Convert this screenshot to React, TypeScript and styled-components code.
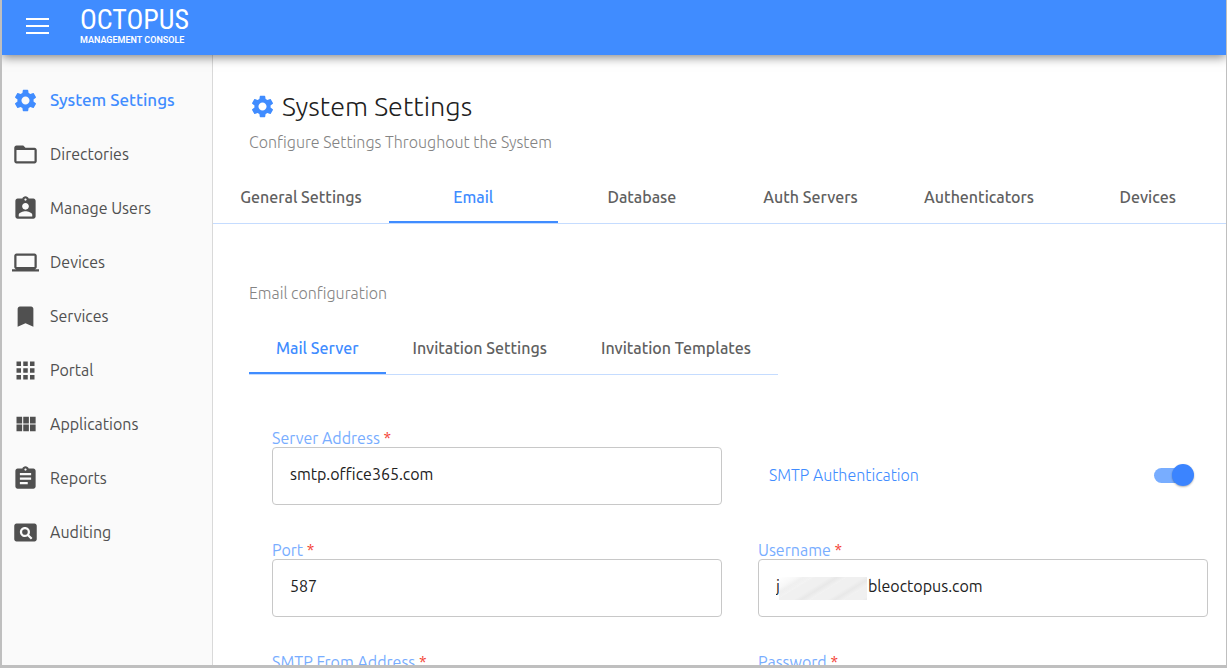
import React, { useState } from 'react';
import styled, { createGlobalStyle, css } from 'styled-components';
import {
  MdSettings,
  MdFolderOpen,
  MdAssignmentInd,
  MdLaptop,
  MdBookmark,
  MdApps,
  MdAssignment,
  MdPageview,
} from 'react-icons/md';

const BLUE = '#408cff';

const GlobalStyle = createGlobalStyle`
  *, *::before, *::after { box-sizing: border-box; }
  body {
    margin: 0;
    background: #fff;
    font-family: Ubuntu, "Noto Sans", "Open Sans", sans-serif;
    font-size: 16px;
    line-height: 20px;
    color: #212121;
  }
  button, input { font: inherit; }
`;

const Frame = styled.div`
  display: flex;
  flex-direction: column;
  height: 100vh;
  overflow: hidden;
  border: solid #bfbfbf;
  border-width: 0 1px 3px 2px;
`;

const Header = styled.header`
  display: flex;
  flex: none;
  align-items: center;
  gap: 29px;
  height: 55px;
  padding: 0 24px 4px;
  background: ${BLUE};
  color: #fff;
  box-shadow: 0 2px 10px rgba(0, 0, 0, 0.5);
  z-index: 1;
`;

const MenuButton = styled.button`
  display: flex;
  padding: 0;
  border: 0;
  background: none;
  color: inherit;
  cursor: pointer;
`;

const Brand = styled.div`
  display: flex;
  flex-direction: column;
  padding-bottom: 2px;
`;

const BrandName = styled.span`
  font-family: "Ubuntu Condensed", "Roboto Condensed", "Liberation Sans Narrow", Roboto, sans-serif;
  font-size: 28px;
  font-weight: 400;
  line-height: 30px;
`;

const BrandTagline = styled.span`
  font-family: Roboto, sans-serif;
  font-size: 9px;
  font-weight: 600;
  line-height: 10px;
  white-space: nowrap;
`;

const Body = styled.div`
  display: flex;
  flex: 1;
  min-height: 0;
`;

const Sidebar = styled.nav`
  flex: none;
  width: 211px;
  padding-top: 18px;
  background: #fafafa;
  border-right: 1px solid #d9d9d9;
`;

const NavLink = styled.a<{ $active?: boolean }>`
  display: flex;
  align-items: center;
  gap: 11px;
  height: 54px;
  padding-left: 10px;
  color: ${(p) => (p.$active ? BLUE : '#505050')};
  font-size: ${(p) => (p.$active ? 17 : 16)}px;
  font-weight: ${(p) => (p.$active ? 500 : 400)};
  text-decoration: none;
  svg { flex: none; }
`;

const Main = styled.main`
  flex: 1;
  min-width: 0;
  overflow: hidden;
`;

const PageHead = styled.div`
  padding: 33px 36px 0;
`;

const Title = styled.h1`
  display: flex;
  align-items: center;
  gap: 6px;
  margin: 0;
  font-size: 27px;
  font-weight: 300;
  line-height: 36px;
  svg { color: ${BLUE}; }
`;

const Muted = styled.p`
  margin: 0;
  font-weight: 300;
  color: #848484;
`;

const Subtitle = styled(Muted)`
  margin-top: 8px;
`;

const tabList = css`
  border-bottom: 1px solid #c5dcff;
`;

const MainTabs = styled.div`
  ${tabList}
  display: grid;
  grid-template-columns: 176px repeat(5, minmax(168px, 1fr));
  margin: 20px -6px 0 0;
`;

const SubTabs = styled.div`
  ${tabList}
  display: flex;
  width: fit-content;
  margin-top: 20px;
`;

const Tab = styled.button<{ $active: boolean }>`
  height: 51px;
  padding: 0 27px;
  border: 0;
  border-bottom: 2px solid ${(p) => (p.$active ? BLUE : 'transparent')};
  background: none;
  color: ${(p) => (p.$active ? BLUE : '#606060')};
  font-weight: 500;
  white-space: nowrap;
  cursor: pointer;
`;

const Section = styled.section`
  padding: 59px 18px 0 36px;
`;

const Form = styled.form`
  display: grid;
  grid-template-columns: 1fr 1fr;
  gap: 36px;
  padding: 54px 0 0 23px;
`;

const Field = styled.div`
  position: relative;
  display: flex;
  flex-direction: column;
`;

const Label = styled.label`
  line-height: 18px;
  color: #78adff;
  span { color: #f44336; }
`;

const TextInput = styled.input`
  width: 100%;
  height: 58px;
  padding: 0 17px 4px;
  border: 1px solid #c8c8c8;
  border-radius: 4px;
  background: #fff;
  color: #212121;
`;

const Redaction = styled.span`
  position: absolute;
  left: 21px;
  bottom: 17px;
  width: 88px;
  height: 23px;
  background:
    linear-gradient(150deg, #fff 0%, rgba(255, 255, 255, 0) 30%),
    repeating-linear-gradient(148deg, #f0f0f0 0 9px, #e8e8e8 13px, #f2f2f2 18px);
`;

const ToggleRow = styled.label`
  display: flex;
  align-items: center;
  justify-content: space-between;
  height: 58px;
  margin-top: 18px;
  padding: 0 14px 2px 11px;
  font-weight: 300;
  color: ${BLUE};
`;

const Switch = styled.input`
  appearance: none;
  position: relative;
  width: 40px;
  height: 22px;
  margin: 0;
  cursor: pointer;
  &::before {
    content: '';
    position: absolute;
    inset: 4px 2px 3px 0;
    border-radius: 8px;
    background: #bdbdbd;
  }
  &::after {
    content: '';
    position: absolute;
    top: 0;
    left: 0;
    width: 22px;
    height: 22px;
    border-radius: 50%;
    background: #fafafa;
    box-shadow: 0 1px 2px rgba(0, 0, 0, 0.3);
  }
  &:checked::before { background: #78adff; }
  &:checked::after { left: 18px; background: #3b84ff; }
`;

function ModulesIcon({ size = 24 }: { size?: number }) {
  return (
    <svg width={size} height={size} viewBox="0 0 24 24" fill="currentColor">
      <path d="M4 11h5V5H4v6zm0 7h5v-6H4v6zm6 0h5v-6h-5v6zm6 0h5v-6h-5v6zm-6-7h5V5h-5v6zm6-6v6h5V5h-5z" />
    </svg>
  );
}

const NAV = [
  { label: 'System Settings', Icon: MdSettings },
  { label: 'Directories', Icon: MdFolderOpen },
  { label: 'Manage Users', Icon: MdAssignmentInd },
  { label: 'Devices', Icon: MdLaptop },
  { label: 'Services', Icon: MdBookmark },
  { label: 'Portal', Icon: MdApps },
  { label: 'Applications', Icon: ModulesIcon },
  { label: 'Reports', Icon: MdAssignment },
  { label: 'Auditing', Icon: MdPageview },
];

const MAIN_TABS = ['General Settings', 'Email', 'Database', 'Auth Servers', 'Authenticators', 'Devices'];
const EMAIL_TABS = ['Mail Server', 'Invitation Settings', 'Invitation Templates'];

type FieldProps = {
  id: string;
  label: string;
  value?: string;
  type?: string;
  redacted?: boolean;
};

function FormField({ id, label, value = '', type = 'text', redacted }: FieldProps) {
  return (
    <Field>
      <Label htmlFor={id}>
        {label} <span>*</span>
      </Label>
      <TextInput id={id} type={type} defaultValue={value} required />
      {redacted && <Redaction />}
    </Field>
  );
}

export default function App() {
  const [mainTab, setMainTab] = useState('Email');
  const [emailTab, setEmailTab] = useState('Mail Server');

  return (
    <>
      <GlobalStyle />
      <Frame>
        <Header>
          <MenuButton aria-label="Menu">
            <svg width="25" height="20" viewBox="0 0 25 20" fill="currentColor">
              <path d="M0 2h23v2H0zM0 9h23v2H0zM0 16h23v2H0z" />
            </svg>
          </MenuButton>
          <Brand>
            <BrandName>OCTOPUS</BrandName>
            <BrandTagline>MANAGEMENT CONSOLE</BrandTagline>
          </Brand>
        </Header>
        <Body>
          <Sidebar>
            {NAV.map(({ label, Icon }) => (
              <NavLink key={label} href="#" $active={label === 'System Settings'}>
                <Icon size={27} />
                {label}
              </NavLink>
            ))}
          </Sidebar>
          <Main>
            <PageHead>
              <Title>
                <MdSettings size={27} />
                System Settings
              </Title>
              <Subtitle>Configure Settings Throughout the System</Subtitle>
            </PageHead>
            <MainTabs role="tablist">
              {MAIN_TABS.map((t) => (
                <Tab key={t} role="tab" aria-selected={t === mainTab} $active={t === mainTab} onClick={() => setMainTab(t)}>
                  {t}
                </Tab>
              ))}
            </MainTabs>
            <Section>
              <Muted>Email configuration</Muted>
              <SubTabs role="tablist">
                {EMAIL_TABS.map((t) => (
                  <Tab key={t} role="tab" aria-selected={t === emailTab} $active={t === emailTab} onClick={() => setEmailTab(t)}>
                    {t}
                  </Tab>
                ))}
              </SubTabs>
              <Form>
                <FormField id="server" label="Server Address" value="smtp.office365.com" />
                <ToggleRow>
                  SMTP Authentication
                  <Switch type="checkbox" role="switch" defaultChecked />
                </ToggleRow>
                <FormField id="port" label="Port" value="587" />
                <FormField id="username" label="Username" value={'j' + '\u2003'.repeat(5) + '\u2002bleoctopus.com'} redacted />
                <FormField id="from" label="SMTP From Address" />
                <FormField id="password" label="Password" type="password" />
              </Form>
            </Section>
          </Main>
        </Body>
      </Frame>
    </>
  );
}
